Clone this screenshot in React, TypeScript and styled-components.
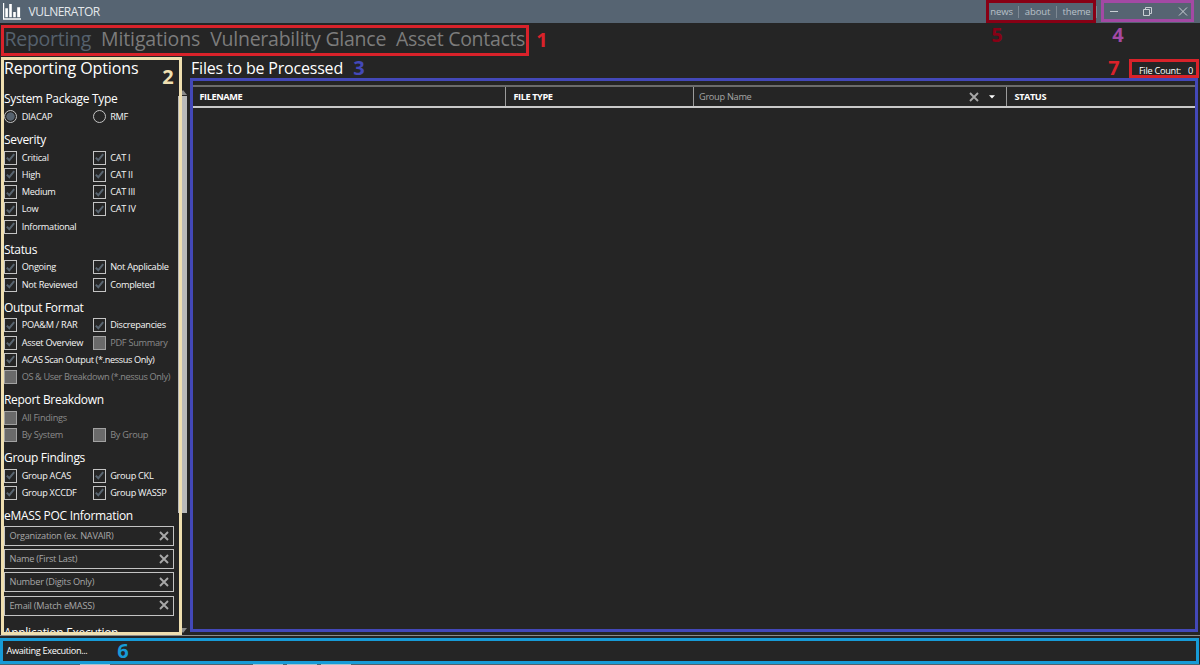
import React from 'react';
import styled, { createGlobalStyle, css } from 'styled-components';

const Global = createGlobalStyle`
  * { box-sizing: border-box; }
  html, body { margin: 0; padding: 0; background: #252525; overflow: hidden; }
  body { font-family: "Open Sans", "Noto Sans", sans-serif; color: #fff; }
`;

const Window = styled.div`
  position: relative;
  width: 1200px;
  height: 665px;
  background: #252525;
  overflow: hidden;
  display: flex;
  flex-direction: column;
  white-space: nowrap;
`;

const TitleBar = styled.header`
  height: 23px;
  flex: none;
  background: #566472;
  display: flex;
  align-items: center;
  padding-left: 3px;
`;

const AppName = styled.div`
  font-size: 12px;
  line-height: 22px;
  letter-spacing: -0.5px;
  margin-left: 7.5px;
  color: #e4e8ec;
  flex: 1;
`;

const TitleLinks = styled.nav`
  display: flex;
  align-items: center;
  height: 23px;
`;

const TitleLink = styled.a<{ $w: number }>`
  width: ${(p) => p.$w}px;
  text-align: center;
  font-size: 9.5px;
  line-height: 12px;
  letter-spacing: -0.1px;
  font-weight: 500;
  color: #b9c1c8;
  border-right: 1px solid #7d8893;
`;

const WindowButtons = styled.div`
  display: flex;
  width: 103px;
  height: 23px;
`;

const Tabs = styled.nav`
  height: 33px;
  flex: none;
  display: flex;
  padding-left: 4.5px;
  gap: 10px;
`;

const Tab = styled.a<{ $active?: boolean; $ls?: number }>`
  font-size: 19.5px;
  line-height: 32px;
  letter-spacing: ${(p) => p.$ls ?? -0.27}px;
  color: ${(p) => (p.$active ? '#55616d' : '#7c7c7c')};
`;

const Body = styled.div`
  height: 579px;
  flex: none;
  display: flex;
`;

const Sidebar = styled.aside`
  width: 190px;
  height: 579px;
  display: flex;
  flex-direction: column;
  padding-left: 4px;
`;

const Title = styled.h1`
  margin: 0;
  font-weight: 400;
  font-size: 16px;
  line-height: 24px;
  height: 29px;
  letter-spacing: -0.1px;
  flex: none;
`;

const ScrollArea = styled.div`
  flex: 1;
  min-height: 0;
  display: flex;
`;

const Options = styled.div`
  flex: 1;
  overflow: hidden;
`;

const ScrollBar = styled.div`
  width: 12px;
  display: flex;
  flex-direction: column;
  align-items: center;
  justify-content: space-between;
  padding: 5px 3px 2px 0;
`;

const Thumb = styled.div`
  width: 9px;
  height: 417px;
  margin: 1px 0 auto;
  background: #b9b9b9;
`;

const Section = styled.section`
  padding-top: 5.3px;
`;

const Heading = styled.h2`
  margin: 0;
  height: 18px;
  line-height: 18px;
  font-size: 12px;
  font-weight: 400;
  letter-spacing: -0.3px;
`;

const Row = styled.div`
  height: 17.3px;
  display: flex;
  align-items: center;
`;

const Option = styled.label<{ $disabled?: boolean; $wide?: boolean }>`
  width: ${(p) => (p.$wide ? 174 : 88.5)}px;
  flex: none;
  display: flex;
  align-items: center;
  gap: 4.7px;
  font-size: 9.2px;
  line-height: 14px;
  font-weight: 500;
  letter-spacing: ${(p) => (p.$wide ? -0.38 : -0.28)}px;
  color: ${(p) => (p.$disabled ? '#8a8a8a' : '#f6f6f6')};
`;

const Box = styled.span<{ $disabled?: boolean }>`
  width: 13px;
  height: 14px;
  flex: none;
  display: flex;
  align-items: center;
  justify-content: center;
  border: 1px solid ${(p) => (p.$disabled ? '#a2a2a2' : '#c4c4c4')};
  background: ${(p) => (p.$disabled ? '#6a6a6a' : 'transparent')};
`;

const Radio = styled.span<{ $on?: boolean }>`
  width: 13px;
  height: 13px;
  flex: none;
  border-radius: 50%;
  border: 1px solid #c4c4c4;
  ${(p) =>
    p.$on &&
    css`
      background: radial-gradient(circle, #56626e 0 3.8px, transparent 4.5px);
    `}
`;

const Fields = styled.div`
  display: flex;
  flex-direction: column;
  gap: 3.2px;
  padding: 1.2px 0 3px;
`;

const Field = styled.div`
  width: 169.5px;
  height: 20px;
  border: 1px solid #c4c4c4;
  display: flex;
  align-items: center;
  justify-content: space-between;
  padding: 0 4px 1px 4.5px;
  font-size: 9.2px;
  font-weight: 500;
  letter-spacing: -0.24px;
  color: #a8a8a8;
`;

const Main = styled.main`
  flex: 1;
  display: flex;
  flex-direction: column;
  padding: 0 4px 3px 2px;
`;

const MainHead = styled.div`
  height: 29px;
  flex: none;
  display: flex;
  justify-content: space-between;
`;

const MainTitle = styled.h1`
  margin: 0 0 0 -1px;
  font-size: 16px;
  font-weight: 400;
  line-height: 24px;
  letter-spacing: -0.19px;
`;

const FileCount = styled.div`
  display: flex;
  gap: 7px;
  padding-right: 3px;
  font-size: 9.2px;
  font-weight: 500;
  line-height: 29px;
  letter-spacing: -0.28px;
`;

const Table = styled.div`
  flex: 1;
  border-bottom: 1px solid #b5b5b5;
`;

const TableHead = styled.div`
  height: 23px;
  border-top: 2px solid #6c6c6c;
  border-bottom: 2px solid #c9c9c9;
  display: flex;
`;

const Column = styled.div<{ $w: number; $filter?: boolean }>`
  width: ${(p) => p.$w}px;
  border-right: 1px solid #9b9b9b;
  display: flex;
  align-items: center;
  padding-left: ${(p) => (p.$filter ? 5 : 7.5)}px;
  font-size: 9.2px;
  letter-spacing: ${(p) => (p.$filter ? -0.28 : -0.42)}px;
  font-weight: ${(p) => (p.$filter ? 500 : 700)};
  color: ${(p) => (p.$filter ? '#a6a6a6' : '#fff')};
  &:last-child { border-right: 0; }
`;

const FilterIcons = styled.span`
  display: flex;
  align-items: center;
  gap: 10px;
  margin-left: auto;
  padding-right: 11px;
`;

const StatusBar = styled.footer`
  height: 30px;
  flex: none;
  border-top: 1px solid #8b8b8b;
  padding-left: 6.5px;
  font-size: 9.2px;
  font-weight: 500;
  line-height: 29px;
  letter-spacing: -0.34px;
`;

const Marker = styled.div<{ $x: number; $y: number; $w: number; $h: number; $c: string; $b?: number }>`
  position: absolute;
  left: ${(p) => p.$x}px;
  top: ${(p) => p.$y}px;
  width: ${(p) => p.$w}px;
  height: ${(p) => p.$h}px;
  border: ${(p) => p.$b ?? 3}px solid ${(p) => p.$c};
`;

const MarkerNumber = styled.div<{ $x: number; $y: number; $c: string }>`
  position: absolute;
  left: ${(p) => p.$x}px;
  top: ${(p) => p.$y}px;
  width: 20px;
  text-align: center;
  font-size: 20px;
  line-height: 20px;
  font-weight: 700;
  color: ${(p) => p.$c};
`;

const Desktop = styled.div`
  position: absolute;
  left: 0;
  right: 0;
  bottom: 0;
  height: 1px;
  background: #4b6670;
  display: flex;
  gap: 4px;
`;

const TaskButton = styled.span<{ $gap?: number }>`
  width: 30px;
  height: 1px;
  background: #a9c3cd;
  margin-left: ${(p) => p.$gap ?? 0}px;
`;

const Logo = () => (
  <svg width="18" height="17" viewBox="0 0 18 17" fill="#fff">
    <path d="M0 0h1.2v15.2H18v1.5H0z" />
    <path d="M2.3 5.3h2.6v8.9H2.3zM6.2 1h2.6v13.2H6.2zM10.2 9h2.6v5.2h-2.6zM14.2 4.2h2.9v10h-2.9z" />
  </svg>
);

const Check = () => (
  <svg width="9" height="9" viewBox="0 0 9 9" fill="none" stroke="#596570" strokeWidth="2">
    <path d="M.8 4.6 3.3 7.2 8.2 1.2" />
  </svg>
);

const Clear = () => (
  <svg width="10" height="10" viewBox="0 0 10 10" fill="none" stroke="#a8a8a8" strokeWidth="1.9">
    <path d="M1 1l8 8M9 1 1 9" />
  </svg>
);

const Arrow = ({ up }: { up?: boolean }) => (
  <svg width="8" height="5" viewBox="0 0 8 5" fill="#8a8a8a">
    <path d={up ? 'M0 5 4 0l4 5z' : 'M0 0h8L4 5z'} />
  </svg>
);

type Item = { label: string; off?: boolean; wide?: boolean };

const CheckOption = ({ label, off, wide }: Item) => (
  <Option $disabled={off} $wide={wide}>
    <Box $disabled={off}>{!off && <Check />}</Box>
    {label}
  </Option>
);

const groups: { title: string; rows: Item[][] }[] = [
  {
    title: 'Severity',
    rows: [
      [{ label: 'Critical' }, { label: 'CAT I' }],
      [{ label: 'High' }, { label: 'CAT II' }],
      [{ label: 'Medium' }, { label: 'CAT III' }],
      [{ label: 'Low' }, { label: 'CAT IV' }],
      [{ label: 'Informational' }],
    ],
  },
  {
    title: 'Status',
    rows: [
      [{ label: 'Ongoing' }, { label: 'Not Applicable' }],
      [{ label: 'Not Reviewed' }, { label: 'Completed' }],
    ],
  },
  {
    title: 'Output Format',
    rows: [
      [{ label: 'POA&M / RAR' }, { label: 'Discrepancies' }],
      [{ label: 'Asset Overview' }, { label: 'PDF Summary', off: true }],
      [{ label: 'ACAS Scan Output (*.nessus Only)', wide: true }],
      [{ label: 'OS & User Breakdown (*.nessus Only)', off: true, wide: true }],
    ],
  },
  {
    title: 'Report Breakdown',
    rows: [
      [{ label: 'All Findings', off: true }],
      [{ label: 'By System', off: true }, { label: 'By Group', off: true }],
    ],
  },
  {
    title: 'Group Findings',
    rows: [
      [{ label: 'Group ACAS' }, { label: 'Group CKL' }],
      [{ label: 'Group XCCDF' }, { label: 'Group WASSP' }],
    ],
  },
];

const fields = ['Organization (ex. NAVAIR)', 'Name (First Last)', 'Number (Digits Only)', 'Email (Match eMASS)'];

export default function App() {
  return (
    <Window>
      <Global />
      <TitleBar>
        <Logo />
        <AppName>VULNERATOR</AppName>
        <TitleLinks>
          <TitleLink $w={34}>news</TitleLink>
          <TitleLink $w={38}>about</TitleLink>
          <TitleLink $w={40}>theme</TitleLink>
        </TitleLinks>
        <WindowButtons>
          <svg width="103" height="23" viewBox="0 0 103 23" fill="none" stroke="#c9cfd4">
            <path d="M13 11.5h8" />
            <path d="M46.5 9.5h6v6h-6zM48.5 9V7.5h6v6H53" />
            <path d="M82 7.5l8 8M90 7.5l-8 8" />
          </svg>
        </WindowButtons>
      </TitleBar>
      <Tabs>
        <Tab $active>Reporting</Tab>
        <Tab $ls={-0.14}>Mitigations</Tab>
        <Tab $ls={-0.25}>Vulnerability Glance</Tab>
        <Tab $ls={-0.3}>Asset Contacts</Tab>
      </Tabs>
      <Body>
        <Sidebar>
          <Title>Reporting Options</Title>
          <ScrollArea>
            <Options>
              <Section>
                <Heading>System Package Type</Heading>
                <Row>
                  <Option><Radio $on />DIACAP</Option>
                  <Option><Radio />RMF</Option>
                </Row>
              </Section>
              {groups.map((g) => (
                <Section key={g.title}>
                  <Heading>{g.title}</Heading>
                  {g.rows.map((r, i) => (
                    <Row key={i}>{r.map((o) => <CheckOption key={o.label} {...o} />)}</Row>
                  ))}
                </Section>
              ))}
              <Section>
                <Heading>eMASS POC Information</Heading>
                <Fields>
                  {fields.map((f) => (
                    <Field key={f}>{f}<Clear /></Field>
                  ))}
                </Fields>
              </Section>
              <Section>
                <Heading>Application Execution</Heading>
              </Section>
            </Options>
            <ScrollBar>
              <Arrow up />
              <Thumb />
              <Arrow />
            </ScrollBar>
          </ScrollArea>
        </Sidebar>
        <Main>
          <MainHead>
            <MainTitle>Files to be Processed</MainTitle>
            <FileCount><span>File Count:</span><span>0</span></FileCount>
          </MainHead>
          <Table>
            <TableHead>
              <Column $w={314}>FILENAME</Column>
              <Column $w={188}>FILE TYPE</Column>
              <Column $w={313} $filter>
                Group Name
                <FilterIcons>
                  <Clear />
                  <svg width="6" height="4" viewBox="0 0 6 4" fill="#fff"><path d="M0 .3h6L3 3.6z" /></svg>
                </FilterIcons>
              </Column>
              <Column $w={188}>STATUS</Column>
            </TableHead>
          </Table>
        </Main>
      </Body>
      <StatusBar>Awaiting Execution...</StatusBar>
      <Desktop>
        <TaskButton $gap={80} />
        <TaskButton $gap={139} />
        <TaskButton />
        <TaskButton />
      </Desktop>

      <Marker $x={1} $y={25} $w={528} $h={31} $c="#d9222a" />
      <MarkerNumber $x={532} $y={30} $c="#d9222a">1</MarkerNumber>
      <Marker $x={1} $y={57} $w={181} $h={578} $c="#efdfb0" />
      <MarkerNumber $x={158} $y={67} $c="#efdfb0">2</MarkerNumber>
      <Marker $x={190} $y={78} $w={1008} $h={554} $c="#4348b8" />
      <MarkerNumber $x={349} $y={58} $c="#4348b8">3</MarkerNumber>
      <Marker $x={1101} $y={0} $w={93} $h={22} $c="#a349a4" />
      <MarkerNumber $x={1108} $y={25} $c="#a349a4">4</MarkerNumber>
      <Marker $x={986} $y={0} $w={110} $h={23} $c="#880015" />
      <MarkerNumber $x={987} $y={25} $c="#880015">5</MarkerNumber>
      <Marker $x={0} $y={638} $w={1199} $h={26} $c="#179bd7" />
      <MarkerNumber $x={113} $y={641} $c="#179bd7">6</MarkerNumber>
      <Marker $x={1129} $y={59} $w={70} $h={19} $c="#d9222a" />
      <MarkerNumber $x={1104} $y={58} $c="#d9222a">7</MarkerNumber>
    </Window>
  );
}
